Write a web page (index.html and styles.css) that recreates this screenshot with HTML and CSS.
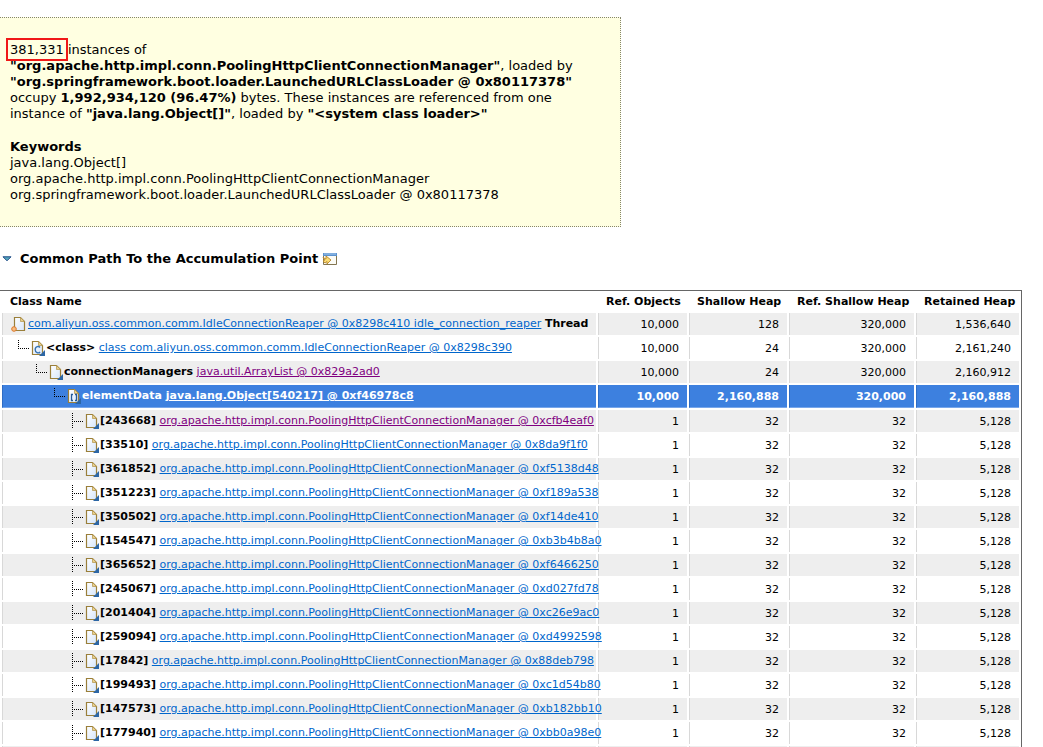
FILE: index.html
```html
<!DOCTYPE html>
<html lang="en">
<head>
<meta charset="utf-8">
<title>Leak Suspect</title>
<link rel="stylesheet" href="styles.css">
</head>
<body>
<svg class="defs" aria-hidden="true">
  <defs>
    <linearGradient id="paper" x1="0" y1="0" x2="1" y2="1"><stop offset="0" stop-color="#fff"/><stop offset="1" stop-color="#d6e6fb"/></linearGradient>
    <symbol id="page" viewBox="0 0 18 18">
      <path d="M4.500 3.500H10.500L14.500 7.500V16.500H4.500Z" fill="url(#paper)" stroke="#9a7f3a" stroke-width="1.200"/>
      <path d="M10.500 3.500V7.500H14.500Z" fill="#e9d08a" stroke="#b0924a" stroke-width=".7"/>
    </symbol>
    <symbol id="obj" viewBox="0 0 18 18"><use href="#page"/><path d="M17 12V18H11Z" fill="#2c66a5"/></symbol>
    <symbol id="cls" viewBox="0 0 18 18"><use href="#obj"/><path d="M12 9.500C11 8 7.200 8 7.200 11.700S11 15.400 12 14" fill="none" stroke="#3874b4" stroke-width="1.400"/></symbol>
    <symbol id="arr" viewBox="0 0 18 18"><use href="#obj"/><path d="M9 8.500H7.500V14.500H9M11 8.500H12.500V14.500H11" fill="none" stroke="#255b98" stroke-width="1.300"/></symbol>
    <symbol id="root" viewBox="0 0 18 18"><use href="#page"/><circle cx="4" cy="15" r="2.300" fill="#f8bd83" stroke="#d9772b"/></symbol>
    <symbol id="corner" viewBox="0 0 20 18"><path d="M8.500 2V11M10 10.500H19" fill="none" stroke="#000" stroke-dasharray="1 1"/></symbol>
    <symbol id="tee" viewBox="0 0 20 18"><path d="M8.500 2V18M10 10.500H19" fill="none" stroke="#000" stroke-dasharray="1 1"/></symbol>
  </defs>
</svg>
<main class="report">
  <section class="suspect">
    <p><span class="mark">381,331</span> instances of<br>
    <b>"org.apache.http.impl.conn.PoolingHttpClientConnectionManager"</b>, loaded by<br>
    <b>"org.springframework.boot.loader.LaunchedURLClassLoader @ 0x80117378"</b><br>
    occupy <b>1,992,934,120 (96.47%)</b> bytes. These instances are referenced from one<br>
    instance of <b>"java.lang.Object[]"</b>, loaded by <b>"&lt;system class loader&gt;"</b></p>
    <p><b>Keywords</b><br>
    java.lang.Object[]<br>
    org.apache.http.impl.conn.PoolingHttpClientConnectionManager<br>
    org.springframework.boot.loader.LaunchedURLClassLoader @ 0x80117378</p>
  </section>
  <h2 class="heading">
    <svg class="toggle" viewBox="0 0 10 6"><path d="M1 .800H9L5 4.800Z" fill="#55a7bd" stroke="#1e4a86"/></svg>
    <span>Common Path To the Accumulation Point</span>
    <svg class="open" viewBox="0 0 16 14"><path d="M1.500 2.500H14.500V12.500H1.500Z" fill="#fbfbf6" stroke="#837550"/><path d="M1 1H15V4H1Z" fill="#5b92cf"/><path d="M2 2H14" stroke="#a8caee"/><path d="M1 5.500L4 7V4L9 8L5 12V9.500L3 11L1 9L3 8Z" fill="#fbdc72" stroke="#b8862b" stroke-width=".9"/></svg>
  </h2>
  <table class="paths">
    <colgroup><col><col class="c-ref"><col class="c-shallow"><col class="c-refshallow"><col class="c-retained"></colgroup>
    <thead><tr><th>Class Name</th><th>Ref. Objects</th><th>Shallow Heap</th><th>Ref. Shallow Heap</th><th>Retained Heap</th></tr></thead>
    <tbody>
      <tr><td><div class="node"><svg><use href="#root"/></svg><span><a href="#">com.aliyun.oss.common.comm.IdleConnectionReaper @ 0x8298c410 idle_connection_reaper</a> <b>Thread</b></span></div></td><td>10,000</td><td>128</td><td>320,000</td><td>1,536,640</td></tr>
      <tr><td><div class="node"><svg class="line"><use href="#corner"/></svg><svg><use href="#cls"/></svg><span><b>&lt;class&gt;</b> <a href="#">class com.aliyun.oss.common.comm.IdleConnectionReaper @ 0x8298c390</a></span></div></td><td>10,000</td><td>24</td><td>320,000</td><td>2,161,240</td></tr>
      <tr><td><div class="node d1"><svg class="line"><use href="#corner"/></svg><svg><use href="#obj"/></svg><span><b>connectionManagers</b> <a class="seen" href="#">java.util.ArrayList @ 0x829a2ad0</a></span></div></td><td>10,000</td><td>24</td><td>320,000</td><td>2,160,912</td></tr>
      <tr class="selected"><td><div class="node d2"><svg class="line"><use href="#corner"/></svg><svg><use href="#arr"/></svg><span>elementData <a href="#">java.lang.Object[540217] @ 0xf46978c8</a></span></div></td><td>10,000</td><td>2,160,888</td><td>320,000</td><td>2,160,888</td></tr>
      <tr><td><div class="node d3"><svg class="line"><use href="#tee"/></svg><svg><use href="#obj"/></svg><span><b>[243668]</b> <a class="seen" href="#">org.apache.http.impl.conn.PoolingHttpClientConnectionManager @ 0xcfb4eaf0</a></span></div></td><td>1</td><td>32</td><td>32</td><td>5,128</td></tr>
      <tr><td><div class="node d3"><svg class="line"><use href="#tee"/></svg><svg><use href="#obj"/></svg><span><b>[33510]</b> <a href="#">org.apache.http.impl.conn.PoolingHttpClientConnectionManager @ 0x8da9f1f0</a></span></div></td><td>1</td><td>32</td><td>32</td><td>5,128</td></tr>
      <tr><td><div class="node d3"><svg class="line"><use href="#tee"/></svg><svg><use href="#obj"/></svg><span><b>[361852]</b> <a href="#">org.apache.http.impl.conn.PoolingHttpClientConnectionManager @ 0xf5138d48</a></span></div></td><td>1</td><td>32</td><td>32</td><td>5,128</td></tr>
      <tr><td><div class="node d3"><svg class="line"><use href="#tee"/></svg><svg><use href="#obj"/></svg><span><b>[351223]</b> <a href="#">org.apache.http.impl.conn.PoolingHttpClientConnectionManager @ 0xf189a538</a></span></div></td><td>1</td><td>32</td><td>32</td><td>5,128</td></tr>
      <tr><td><div class="node d3"><svg class="line"><use href="#tee"/></svg><svg><use href="#obj"/></svg><span><b>[350502]</b> <a href="#">org.apache.http.impl.conn.PoolingHttpClientConnectionManager @ 0xf14de410</a></span></div></td><td>1</td><td>32</td><td>32</td><td>5,128</td></tr>
      <tr><td><div class="node d3"><svg class="line"><use href="#tee"/></svg><svg><use href="#obj"/></svg><span><b>[154547]</b> <a href="#">org.apache.http.impl.conn.PoolingHttpClientConnectionManager @ 0xb3b4b8a0</a></span></div></td><td>1</td><td>32</td><td>32</td><td>5,128</td></tr>
      <tr><td><div class="node d3"><svg class="line"><use href="#tee"/></svg><svg><use href="#obj"/></svg><span><b>[365652]</b> <a href="#">org.apache.http.impl.conn.PoolingHttpClientConnectionManager @ 0xf6466250</a></span></div></td><td>1</td><td>32</td><td>32</td><td>5,128</td></tr>
      <tr><td><div class="node d3"><svg class="line"><use href="#tee"/></svg><svg><use href="#obj"/></svg><span><b>[245067]</b> <a href="#">org.apache.http.impl.conn.PoolingHttpClientConnectionManager @ 0xd027fd78</a></span></div></td><td>1</td><td>32</td><td>32</td><td>5,128</td></tr>
      <tr><td><div class="node d3"><svg class="line"><use href="#tee"/></svg><svg><use href="#obj"/></svg><span><b>[201404]</b> <a href="#">org.apache.http.impl.conn.PoolingHttpClientConnectionManager @ 0xc26e9ac0</a></span></div></td><td>1</td><td>32</td><td>32</td><td>5,128</td></tr>
      <tr><td><div class="node d3"><svg class="line"><use href="#tee"/></svg><svg><use href="#obj"/></svg><span><b>[259094]</b> <a href="#">org.apache.http.impl.conn.PoolingHttpClientConnectionManager @ 0xd4992598</a></span></div></td><td>1</td><td>32</td><td>32</td><td>5,128</td></tr>
      <tr><td><div class="node d3"><svg class="line"><use href="#tee"/></svg><svg><use href="#obj"/></svg><span><b>[17842]</b> <a href="#">org.apache.http.impl.conn.PoolingHttpClientConnectionManager @ 0x88deb798</a></span></div></td><td>1</td><td>32</td><td>32</td><td>5,128</td></tr>
      <tr><td><div class="node d3"><svg class="line"><use href="#tee"/></svg><svg><use href="#obj"/></svg><span><b>[199493]</b> <a href="#">org.apache.http.impl.conn.PoolingHttpClientConnectionManager @ 0xc1d54b80</a></span></div></td><td>1</td><td>32</td><td>32</td><td>5,128</td></tr>
      <tr><td><div class="node d3"><svg class="line"><use href="#tee"/></svg><svg><use href="#obj"/></svg><span><b>[147573]</b> <a href="#">org.apache.http.impl.conn.PoolingHttpClientConnectionManager @ 0xb182bb10</a></span></div></td><td>1</td><td>32</td><td>32</td><td>5,128</td></tr>
      <tr><td><div class="node d3"><svg class="line"><use href="#tee"/></svg><svg><use href="#obj"/></svg><span><b>[177940]</b> <a href="#">org.apache.http.impl.conn.PoolingHttpClientConnectionManager @ 0xbb0a98e0</a></span></div></td><td>1</td><td>32</td><td>32</td><td>5,128</td></tr>
      <tr><td></td><td></td><td></td><td></td><td></td></tr>
    </tbody>
  </table>
</main>
</body>
</html>
```

FILE: styles.css
```css
* { box-sizing: border-box; }
body {
  margin: 0;
  background: #fff;
  color: #000;
  font-family: Verdana, "DejaVu Sans", sans-serif;
  font-size: 13px;
  line-height: 16px;
}
.defs { position: absolute; width: 0; height: 0; }
.report { height: 100vh; overflow: hidden; padding: 17px 21px 0 0; }

.suspect {
  width: 621px;
  max-width: 100%;
  padding: 24px 10px 23px;
  background: #ffffe1;
  border: 1px dotted #85856c;
  border-left: 0;
}
.suspect p { margin: 0; }
.suspect p + p { margin-top: 17px; }
.mark { outline: 2px solid #f01818; outline-offset: 2px; }

.heading {
  display: flex;
  align-items: center;
  margin: 24px 0 23px;
  padding-left: 2px;
  font-size: 13px;
  line-height: 16px;
}
.toggle { width: 10px; height: 6px; margin-right: 8px; }
.open { width: 16px; height: 14px; margin-left: 4px; }

.paths {
  width: 100%;
  table-layout: fixed;
  border: 1px solid #666;
  border-left: 0;
  border-spacing: 2px;
  font-size: 11px;
  line-height: 14px;
}
.c-ref { width: 89px; }
.c-shallow { width: 98px; }
.c-refshallow { width: 125px; }
.c-retained { width: 103px; }
.paths th {
  height: 18px;
  padding: 0 8px;
  text-align: right;
  white-space: nowrap;
}
.paths th:first-child { text-align: left; }
.paths td {
  height: 22px;
  padding: 2px 8px 0 7px;
  border-left: 1px solid #d8d8d8;
  text-align: right;
  white-space: nowrap;
}
.paths td:first-child { padding: 0 0 0 7px; text-align: left; }
.paths tbody tr:nth-child(odd) { --row: #eee; }
.paths td { background: var(--row, #fff); }

.node { display: flex; height: 20px; }
.node svg { width: 18px; height: 18px; flex: none; }
.node .line { width: 20px; margin-right: -2px; }
.node span { line-height: 19px; }
.d1 { padding-left: 18px; }
.d2 { padding-left: 36px; }
.d3 { padding-left: 54px; }

a { color: #0066cc; }
a.seen { color: #800080; }
.paths .selected td {
  height: 23px;
  background: #3d80df;
  border-left-color: #2f6cc4;
  border-bottom: 1px solid #78a6ea;
  color: #fff;
  font-weight: bold;
}
.selected a { color: #fff; }
```
